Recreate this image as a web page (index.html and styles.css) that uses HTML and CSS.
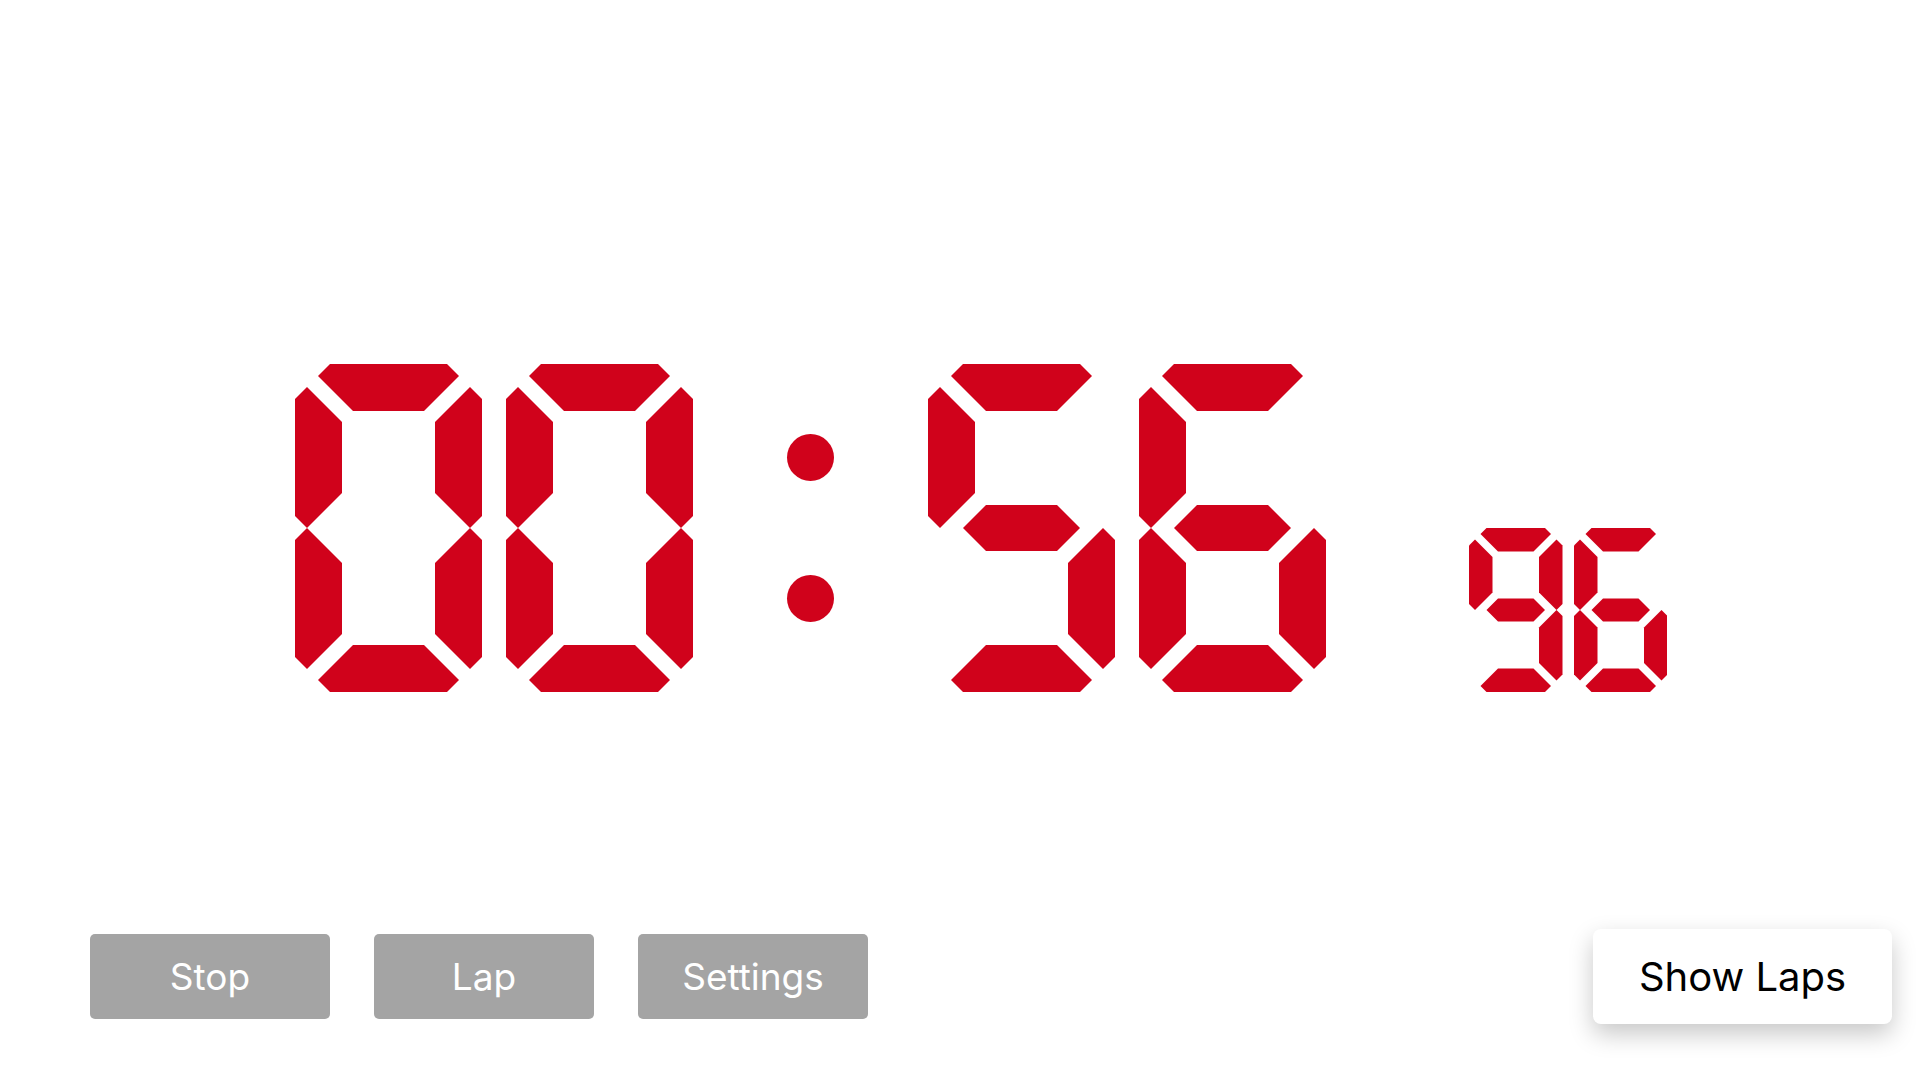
FILE: index.html
```html
<!DOCTYPE html>
<html lang="en">
<head>
<meta charset="UTF-8">
<meta name="viewport" content="width=device-width, initial-scale=1.0">
<title>Stopwatch</title>
<link rel="stylesheet" href="styles.css">
</head>
<body>
<div class="clock">
  <div class="main-time" id="mainTime"></div>
  <div class="hundredths" id="hundredths"></div>
</div>
<div class="controls">
  <div class="btn-group">
    <button class="btn btn-stop">Stop</button>
    <button class="btn btn-lap">Lap</button>
    <button class="btn btn-settings">Settings</button>
  </div>
  <button class="laps-btn">Show Laps</button>
</div>
<script>
  // 7-segment shapes in a 187 x 328 box
  const segments = {
    a: '35,0 152,0 164,12 129,47 58,47 23,12',
    b: '187,35 175,23 140,58 140,129 175,164 187,152',
    c: '187,176 175,164 140,199 140,270 175,305 187,293',
    d: '23,316 58,281 129,281 164,316 152,328 35,328',
    e: '0,176 12,164 47,199 47,270 12,305 0,293',
    f: '0,35 12,23 47,58 47,129 12,164 0,152',
    g: '35,164 58,141 129,141 152,164 129,187 58,187'
  };
  const digits = {
    '0': 'abcdef', '1': 'bc', '2': 'abged', '3': 'abgcd', '4': 'fgbc',
    '5': 'afgcd', '6': 'afgedc', '7': 'abc', '8': 'abcdefg', '9': 'abcdfg'
  };

  function makeDigit(ch, cls) {
    let polys = '';
    for (const s of digits[ch]) {
      polys += `<polygon points="${segments[s]}"/>`;
    }
    return `<svg class="${cls}" viewBox="0 0 187 328">${polys}</svg>`;
  }

  function render(text, small) {
    let html = '';
    for (const ch of text) {
      if (ch === ':') {
        html += '<div class="colon"><span class="dot"></span><span class="dot"></span></div>';
      } else {
        html += makeDigit(ch, 'digit');
      }
    }
    document.getElementById('mainTime').innerHTML = html;
    document.getElementById('hundredths').innerHTML =
      [...small].map(ch => makeDigit(ch, 'digit digit-small')).join('');
  }

  render('00:56', '96');
</script>
</body>
</html>
```

FILE: styles.css
```css
* {
  padding: 0;
  margin: 0;
  box-sizing: border-box;
}
body {
  font-family: Inter, "Liberation Sans", Arial, sans-serif;
  background-color: #fff;
  height: 100vh;
  display: flex;
  flex-direction: column;
  overflow: hidden;
}
.clock {
  display: flex;
  align-items: flex-end;
  padding: 364px 0 0 295px;
}
.main-time {
  display: flex;
  gap: 24px;
}
.digit {
  display: block;
  width: 187px;
  height: 328px;
  fill: #d0021b;
}
.digit-small {
  width: 93.5px;
  height: 164px;
}
.colon {
  width: 187px;
  height: 328px;
  display: flex;
  flex-direction: column;
  align-items: center;
  gap: 94px;
  padding-top: 70px;
}
.dot {
  width: 47px;
  height: 47px;
  border-radius: 50%;
  background-color: #d0021b;
}
.hundredths {
  display: flex;
  gap: 11px;
  margin-left: 143px;
}
.controls {
  margin-top: auto;
  display: flex;
  justify-content: space-between;
  align-items: center;
  padding: 0 28px 56px 90px;
}
.btn-group {
  display: flex;
  gap: 44px;
}
.btn {
  height: 85px;
  background-color: #a4a4a4;
  color: #fff;
  border: none;
  border-radius: 5px;
  font-family: inherit;
  font-size: 37px;
  cursor: pointer;
}
.btn-stop {
  width: 240px;
}
.btn-lap {
  width: 220px;
}
.btn-settings {
  width: 230px;
}
.laps-btn {
  width: 299px;
  height: 95px;
  background-color: #fff;
  color: #000;
  border: none;
  border-radius: 8px;
  box-shadow: 0 10px 24px rgba(0, 0, 0, 0.22);
  font-family: inherit;
  font-size: 40px;
  cursor: pointer;
}
```
